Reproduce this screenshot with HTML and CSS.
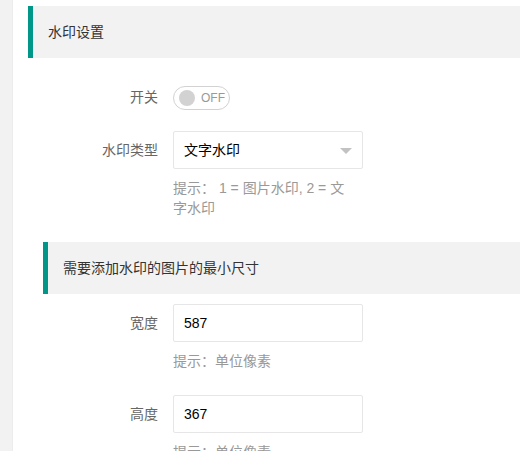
FILE: index.html
```html
<!DOCTYPE html>
<html lang="zh-CN">
<head>
<meta charset="utf-8">
<title>水印设置</title>
<link rel="stylesheet" href="styles.css">
</head>
<body>
<div class="page">
  <aside class="side"></aside>
  <main class="main">
    <div class="quote">水印设置</div>
    <div class="form">
      <div class="row row-first">
        <label class="label">开关</label>
        <div class="field">
          <div class="switch"><i class="knob"></i><em>OFF</em></div>
        </div>
      </div>
      <div class="row">
        <label class="label">水印类型</label>
        <div class="field">
          <div class="select">
            <span>文字水印</span>
            <i class="arrow"></i>
          </div>
          <div class="hint">提示： 1 = 图片水印, 2 = 文字水印</div>
        </div>
      </div>
      <div class="sub">
        <div class="quote">需要添加水印的图片的最小尺寸</div>
        <div class="row">
          <label class="label">宽度</label>
          <div class="field">
            <div class="input">587</div>
            <div class="hint">提示：单位像素</div>
          </div>
        </div>
        <div class="row">
          <label class="label">高度</label>
          <div class="field">
            <div class="input">367</div>
            <div class="hint">提示：单位像素</div>
          </div>
        </div>
      </div>
    </div>
  </main>
</div>
</body>
</html>
```

FILE: styles.css
```css
html, body {
  margin: 0;
  padding: 0;
  background: #fff;
  overflow: hidden;
}
body {
  font-family: "Liberation Sans", "Noto Sans CJK SC", sans-serif;
  font-size: 14px;
  color: #333;
}
.page {
  display: flex;
  min-height: 451px;
}
.side {
  width: 12px;
  flex: none;
  background: #f2f2f2;
  border-right: 1px solid #ececec;
}
.main {
  flex: 1;
  padding: 6px 0 0 15px;
}
.quote {
  height: 22px;
  padding: 15px 15px 15px 15px;
  line-height: 22px;
  border-left: 5px solid #009688;
  background: #f2f2f2;
  color: #333;
}
.form {
  padding-top: 20px;
}
.row {
  display: flex;
  margin-bottom: 15px;
}
.label {
  width: 130px;
  flex: none;
  padding: 9px 15px 9px 0;
  line-height: 20px;
  text-align: right;
  color: #666;
}
.field {
  width: 190px;
}
.switch {
  margin-top: 8px;
  box-sizing: border-box;
  width: 57px;
  height: 24px;
  border: 1px solid #d2d2d2;
  border-radius: 20px;
  display: flex;
  align-items: center;
  padding-left: 5px;
}
.knob {
  width: 16px;
  height: 16px;
  border-radius: 50%;
  background: #d2d2d2;
}
.switch em {
  font-style: normal;
  font-size: 12px;
  color: #999;
  margin-left: 6px;
  line-height: 20px;
}
.select, .input {
  box-sizing: border-box;
  height: 38px;
  border: 1px solid #e6e6e6;
  border-radius: 2px;
  padding-left: 10px;
  line-height: 36px;
  color: #000;
  background: #fff;
}
.select {
  display: flex;
  justify-content: space-between;
  align-items: center;
  padding-right: 10px;
}
.arrow {
  width: 0;
  height: 0;
  border-left: 6px solid transparent;
  border-right: 6px solid transparent;
  border-top: 6px solid #c2c2c2;
  margin-top: 1px;
}
.hint {
  width: 178px;
  padding: 9px 0;
  line-height: 20px;
  color: #999;
}
.sub {
  padding-left: 15px;
}
.sub .quote {
  margin-bottom: 10px;
}
.sub .label {
  width: 115px;
}
```
